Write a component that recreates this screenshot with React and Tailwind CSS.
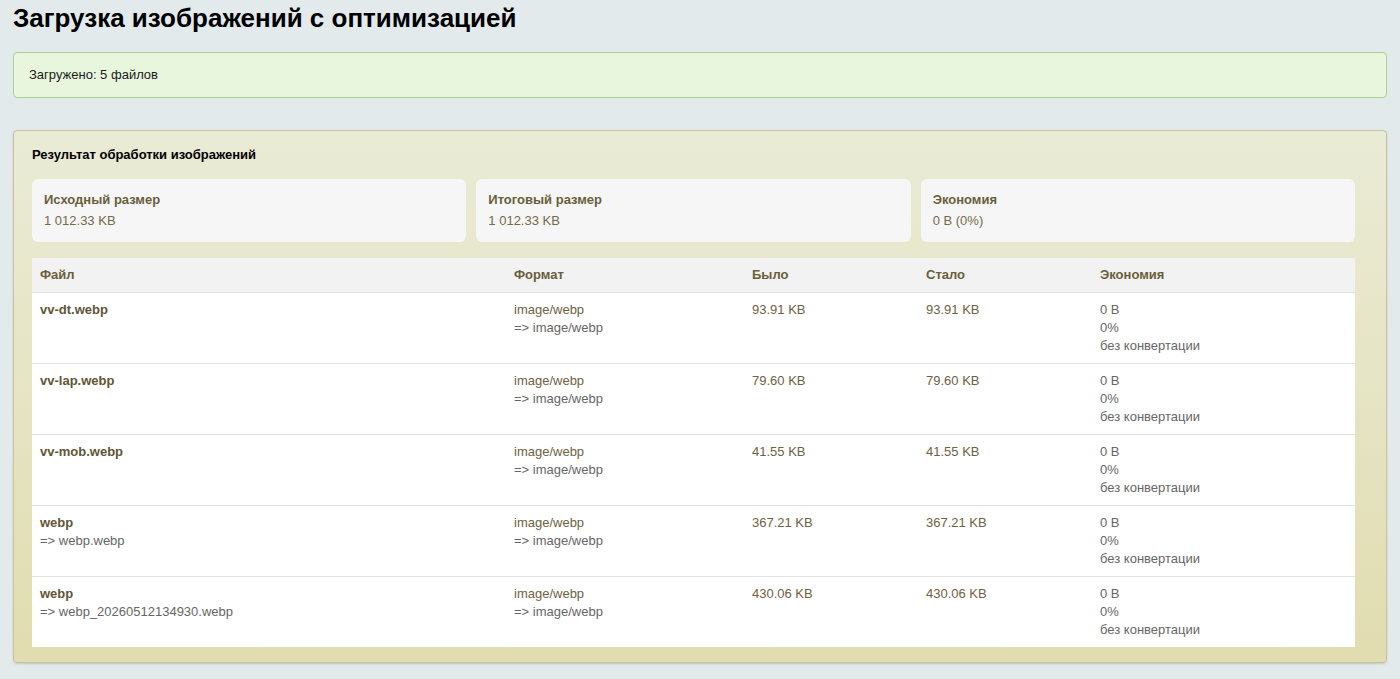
import React from 'react'

// Итоги обработки загруженных изображений
const totals = [
  { label: 'Исходный размер', value: '1 012.33 KB' },
  { label: 'Итоговый размер', value: '1 012.33 KB' },
  { label: 'Экономия', value: '0 B (0%)' },
]

const files = [
  { name: 'vv-dt.webp', before: '93.91 KB', after: '93.91 KB' },
  { name: 'vv-lap.webp', before: '79.60 KB', after: '79.60 KB' },
  { name: 'vv-mob.webp', before: '41.55 KB', after: '41.55 KB' },
  { name: 'webp', renamed: 'webp.webp', before: '367.21 KB', after: '367.21 KB' },
  { name: 'webp', renamed: 'webp_20260512134930.webp', before: '430.06 KB', after: '430.06 KB' },
]

export default function App() {
  return (
    <div className="min-h-screen bg-[#e3eaec] px-[13px] pt-[4px] pb-4 font-['Liberation_Sans',Arial,sans-serif] text-[13px]">
      <h1 className="text-[26px] leading-[28px] font-bold text-black">Загрузка изображений с оптимизацией</h1>

      <div className="mt-[20px] h-[46px] flex items-center px-[15px] rounded-[4px] border border-[#a9d38c] bg-[#e8f6de] text-[13px] text-[#1a1a1a]">
        Загружено: 5 файлов
      </div>

      <div className="mt-[32px] rounded-[4px] border border-[#c9c49c] bg-gradient-to-b from-[#eaebd6] to-[#e1ddb0] pl-[18px] pr-[31px] pt-[16px] pb-[15px] shadow-[0_1px_2px_rgba(0,0,0,0.15)]">
        <h2 className="text-[13px] leading-[16px] font-bold text-black">Результат обработки изображений</h2>

        <div className="mt-[16px] grid grid-cols-3 gap-[10px]">
          {totals.map((t) => (
            <div key={t.label} className="h-[63px] rounded-[6px] bg-[#f6f6f6] px-[12px] pt-[12px]">
              <div className="font-bold leading-[18px] text-[#6a5e3b]">{t.label}</div>
              <div className="mt-[3px] leading-[18px] text-[#76694a]">{t.value}</div>
            </div>
          ))}
        </div>

        <table className="mt-[16px] w-full border-collapse bg-white table-fixed">
          <colgroup>
            <col className="w-[474px]" />
            <col className="w-[238px]" />
            <col className="w-[174px]" />
            <col className="w-[174px]" />
            <col />
          </colgroup>
          <thead>
            <tr className="bg-[#f2f2f2] h-[34px] text-left">
              {['Файл', 'Формат', 'Было', 'Стало', 'Экономия'].map((h) => (
                <th key={h} className="px-[8px] font-bold text-[#6a5e3b] leading-[18px]">{h}</th>
              ))}
            </tr>
          </thead>
          <tbody>
            {files.map((f, i) => (
              <tr key={i} className="border-t border-[#e2e2e2] align-top leading-[18px]">
                <td className="px-[8px] py-[8px]">
                  <div className="font-bold text-[#5f5535]">{f.name}</div>
                  {f.renamed && <div className="text-[#666]">=&gt; {f.renamed}</div>}
                </td>
                <td className="px-[8px] py-[8px]">
                  <div className="text-[#6e6243]">image/webp</div>
                  <div className="text-[#666]">=&gt; image/webp</div>
                </td>
                <td className="px-[8px] py-[8px] text-[#6e6243]">{f.before}</td>
                <td className="px-[8px] py-[8px] text-[#6e6243]">{f.after}</td>
                <td className="px-[8px] py-[8px] text-[#666]">
                  <div>0 B</div>
                  <div>0%</div>
                  <div>без конвертации</div>
                </td>
              </tr>
            ))}
          </tbody>
        </table>
      </div>
    </div>
  )
}
